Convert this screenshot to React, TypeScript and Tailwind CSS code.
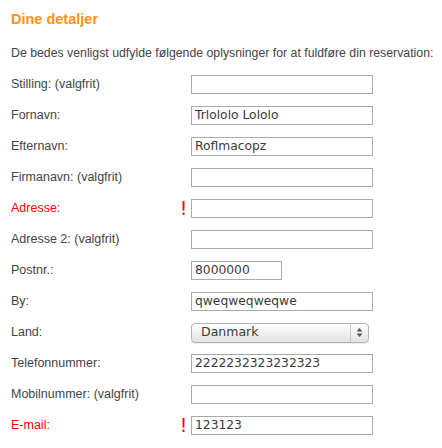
import React from "react";

type Row = {
  label: string;
  value?: string;
  required?: boolean;
  kind?: "input" | "short" | "select";
};

const rows: Row[] = [
  { label: "Stilling: (valgfrit)" },
  { label: "Fornavn:", value: "Trlololo Lololo" },
  { label: "Efternavn:", value: "Roflmacopz" },
  { label: "Firmanavn: (valgfrit)" },
  { label: "Adresse:", required: true },
  { label: "Adresse 2: (valgfrit)" },
  { label: "Postnr.:", value: "8000000", kind: "short" },
  { label: "By:", value: "qweqweqweqwe" },
  { label: "Land:", value: "Danmark", kind: "select" },
  { label: "Telefonnummer:", value: "2222232323232323" },
  { label: "Mobilnummer: (valgfrit)" },
  { label: "E-mail:", value: "123123", required: true },
];

function Field({ row }: { row: Row }) {
  if (row.kind === "select") {
    return (
      <div className="flex h-[20px] w-[178px] items-stretch rounded-[4px] border border-[#b4b4b4] bg-gradient-to-b from-[#ffffff] via-[#f1f1f1] to-[#e2e2e2] shadow-[0_1px_1px_rgba(0,0,0,0.08)]">
        <div className="flex flex-1 items-center pl-[9px] text-[12.5px] text-[#3a3a3a] [font-family:'DejaVu_Sans',sans-serif]">
          {row.value}
        </div>
        <div className="flex w-[18px] items-center justify-center border-l border-[#c8c8c8]">
          <svg width="7" height="11" viewBox="0 0 7 11">
            <path d="M3.5 1 L6.5 4.5 L0.5 4.5 Z" fill="#555" />
            <path d="M3.5 10 L6.5 6.5 L0.5 6.5 Z" fill="#555" />
          </svg>
        </div>
      </div>
    );
  }
  const w = row.kind === "short" ? "w-[91px]" : "w-[182px]";
  return (
    <div
      className={`flex h-[19px] ${w} items-center border border-[#ababab] bg-white pl-[3px] text-[12.3px] leading-none text-[#3a3a3a] [font-family:'DejaVu_Sans',sans-serif]`}
    >
      {row.value ?? ""}
    </div>
  );
}

export default function App() {
  return (
    <div className="h-[448px] w-[442px] bg-white pl-[11px] [font-family:'Liberation_Sans',Arial,sans-serif]">
      <h2 className="pt-[10px] text-[14.5px] font-bold leading-[18px] text-[#ff9313]">
        Dine detaljer
      </h2>
      <p className="mt-[18px] text-[12.3px] leading-[14px] text-[#444444]">
        De bedes venligst udfylde følgende oplysninger for at fuldføre din reservation:
      </p>
      <div className="mt-[9px] flex flex-col">
        {rows.map((r) => (
          <div key={r.label} className="flex h-[31px] items-center">
            <div
              className={`w-[165px] text-[12.5px] ${r.required ? "text-[#ff0000]" : "text-[#444444]"}`}
            >
              {r.label}
            </div>
            <div className="flex w-[15px] justify-center">
              {r.required && (
                <span className="text-[19px] leading-none text-[#ff0000] [font-family:'DejaVu_Sans',sans-serif]">
                  !
                </span>
              )}
            </div>
            <Field row={r} />
          </div>
        ))}
      </div>
    </div>
  );
}
